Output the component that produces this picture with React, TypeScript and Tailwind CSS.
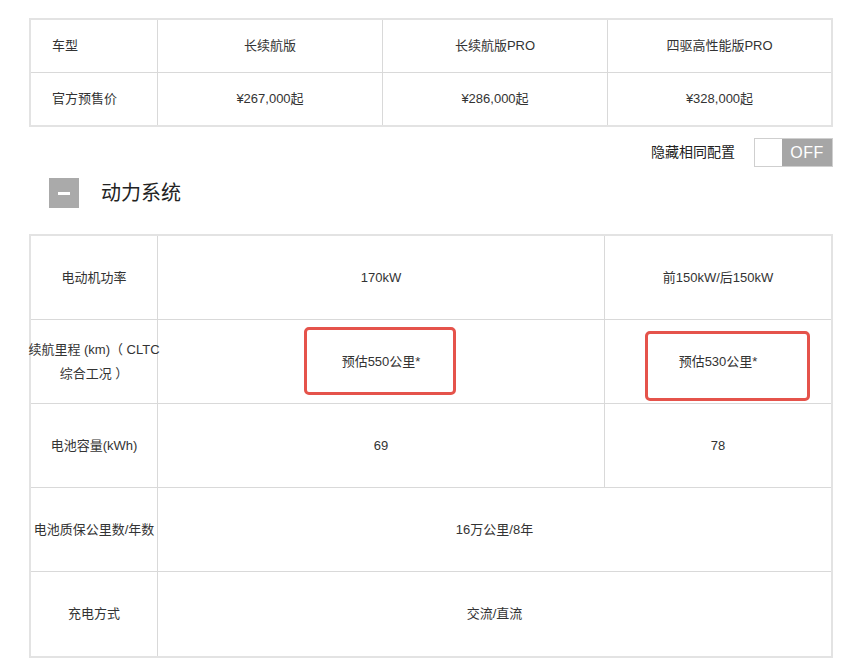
import React from 'react';

const font = { fontFamily: '"Liberation Sans", "Noto Sans CJK SC", sans-serif' };

const models = ['长续航版', '长续航版PRO', '四驱高性能版PRO'];
const prices = ['¥267,000起', '¥286,000起', '¥328,000起'];

// Spec rows: label, then either [shared, awd] or a single value across all columns
const specs: { label: React.ReactNode; values: React.ReactNode[]; mark?: boolean }[] = [
  { label: '电动机功率', values: ['170kW', '前150kW/后150kW'] },
  {
    label: (
      <>
        续航里程 (km)（ CLTC
        <br />
        综合工况 ）
      </>
    ),
    values: ['预估550公里*', '预估530公里*'],
    mark: true,
  },
  { label: '电池容量(kWh)', values: ['69', '78'] },
  { label: '电池质保公里数/年数', values: ['16万公里/8年'] },
  { label: '充电方式', values: ['交流/直流'] },
];

export default function App() {
  return (
    <div className="min-h-screen bg-white text-[#333] text-[13px]" style={font}>
      <div className="ml-[29px] w-[804px] pt-[18px]">
        {/* Model / price header */}
        <div className="border-2 border-[#e3e3e3]">
          <div className="grid grid-cols-[127px_225px_225px_1fr] h-[53px] border-b border-[#d9d9d9]">
            <div className="flex items-center pl-[21px] border-r border-[#d9d9d9]">车型</div>
            {models.map((m, i) => (
              <div
                key={m}
                className={`flex items-center justify-center ${i < 2 ? 'border-r border-[#d9d9d9]' : ''}`}
              >
                {m}
              </div>
            ))}
          </div>
          <div className="grid grid-cols-[127px_225px_225px_1fr] h-[52px]">
            <div className="flex items-center pl-[21px] border-r border-[#d9d9d9]">官方预售价</div>
            {prices.map((p, i) => (
              <div
                key={p}
                className={`flex items-center justify-center ${i < 2 ? 'border-r border-[#d9d9d9]' : ''}`}
              >
                {p}
              </div>
            ))}
          </div>
        </div>

        {/* Hide-same toggle */}
        <div className="flex justify-end items-center mt-[11px] gap-[19px]">
          <span className="text-[14px] text-[#222]">隐藏相同配置</span>
          <div className="flex h-[29px] w-[79px] border border-[#cfcfcf]">
            <div className="w-[27px] bg-white" />
            <div className="flex-1 bg-[#a6a6a6] flex items-center justify-center text-white text-[16px] tracking-[0.5px]">
              OFF
            </div>
          </div>
        </div>

        {/* Section header */}
        <div className="flex items-center mt-[11px] ml-[20px]">
          <div className="w-[30px] h-[30px] bg-[#aaaaaa] flex items-center justify-center">
            <div className="w-[12px] h-[3px] bg-white" />
          </div>
          <span className="ml-[22px] text-[20px] text-[#222]">动力系统</span>
        </div>

        {/* Power system table */}
        <div className="mt-[26px] border-2 border-[#e3e3e3]">
          {specs.map((row, r) => (
            <div
              key={r}
              className={`grid grid-cols-[127px_447px_1fr] h-[84px] ${r < specs.length - 1 ? 'border-b border-[#d9d9d9]' : ''}`}
            >
              <div className="flex items-center justify-center text-center leading-[24px] border-r border-[#d9d9d9] whitespace-nowrap">
                <div>{row.label}</div>
              </div>
              {row.values.length === 1 ? (
                <div className="col-span-2 flex items-center justify-center">{row.values[0]}</div>
              ) : (
                <>
                  <div className="relative flex items-center justify-center border-r border-[#d9d9d9]">
                    {row.values[0]}
                    {row.mark && (
                      <div className="absolute left-[146px] top-[7px] w-[152px] h-[68px] border-[3px] border-[#e5534b] rounded-[5px]" />
                    )}
                  </div>
                  <div className="relative flex items-center justify-center">
                    {row.values[1]}
                    {row.mark && (
                      <div className="absolute left-[40px] top-[11px] w-[165px] h-[70px] border-[3px] border-[#e5534b] rounded-[5px]" />
                    )}
                  </div>
                </>
              )}
            </div>
          ))}
        </div>
      </div>
    </div>
  );
}
